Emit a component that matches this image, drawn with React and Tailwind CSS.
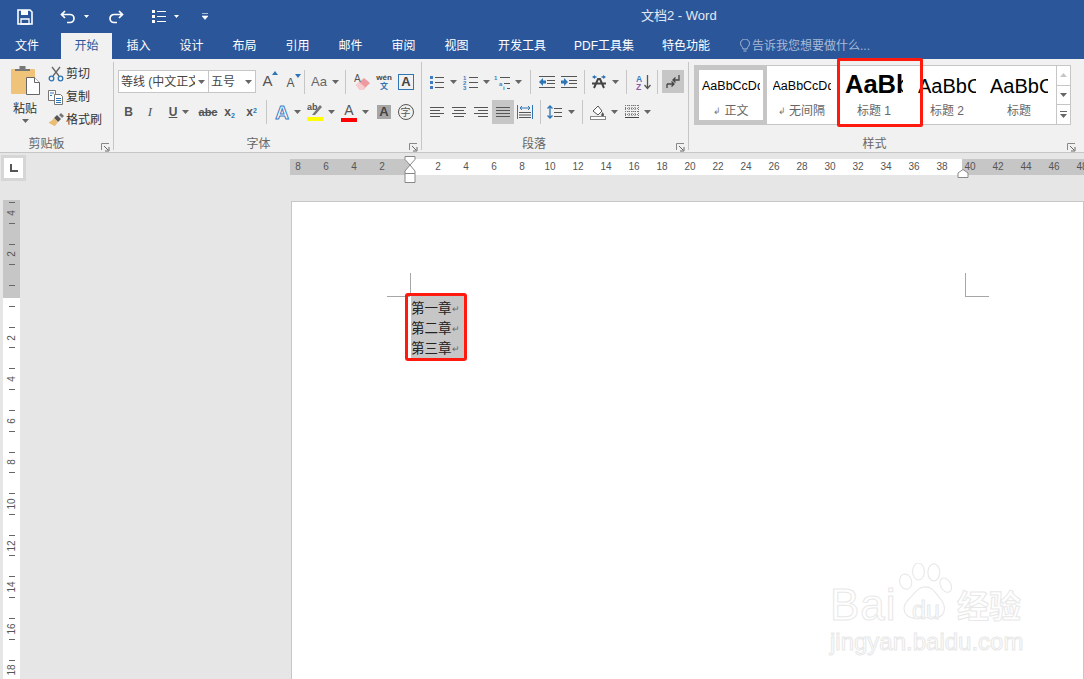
const tabs = [
  ["文件", "w-[54px] mr-[7px]"],
  ["开始", "w-[51px]"],
  ["插入", "w-[53px]"],
  ["设计", "w-[53px]"],
  ["布局", "w-[53px]"],
  ["引用", "w-[53px]"],
  ["邮件", "w-[53px]"],
  ["审阅", "w-[53px]"],
  ["视图", "w-[53px]"],
  ["开发工具", "w-[78px]"],
  ["PDF工具集", "w-[86px]"],
  ["特色功能", "w-[78px]"],
];

const leftNumbers = [8, 6, 4, 2];
const midNumbers = [2, 4, 6, 8, 10, 12, 14, 16, 18, 20, 22, 24, 26, 28, 30, 32, 34, 36, 38];
const rightNumbers = [40, 42, 44, 46, 48];
const sideNumbers = [4, 2, "", 2, 4, 6, 8, 10, 12, 14, 16, 18];

function Caret({ className = "" }) {
  return (
    <svg width="7" height="4" viewBox="0 0 7 4" className={className}>
      <path d="M0 0h7L3.5 4z" fill="#666" />
    </svg>
  );
}

function Btn({ className = "w-[22px]", caret, active, children }) {
  return (
    <div className={`flex h-full shrink-0 items-center justify-center ${active ? "bg-[#c6c6c6]" : ""} ${className}`}>
      {children}
      {caret ? <Caret className="ml-[5px]" /> : null}
    </div>
  );
}

function Sep({ className = "" }) {
  return <div className={`h-[24px] w-px shrink-0 bg-[#c6c6c6] ${className}`} />;
}

function Launcher({ className = "right-[3px]" }) {
  return (
    <svg width="9" height="9" viewBox="0 0 9 9" className={`absolute bottom-[-1px] ${className}`}>
      <path d="M.5 7V.5H8" fill="none" stroke="#888" />
      <path d="M3 3l4 4M4 8h4V4" fill="none" stroke="#666" />
    </svg>
  );
}

function Group({ className, labelClass, launcherClass, label, children }) {
  return (
    <div className={`my-[3px] flex h-[88px] shrink-0 flex-col border-r border-[#c6c6c6] ${className}`}>
      <div className="min-h-0 flex-1">{children}</div>
      <div className={`relative top-[1px] h-[14px] text-center text-[12px] leading-[14px] text-[#666] ${labelClass}`}>
        {label}
        <Launcher className={launcherClass} />
      </div>
    </div>
  );
}

function Svg16({ children, w = 16, h = 16 }) {
  return (
    <svg width={w} height={h} viewBox={`0 0 ${w} ${h}`} className="shrink-0">
      {children}
    </svg>
  );
}

function LinesIcon({ rows }) {
  return (
    <Svg16>
      {rows.map(([x1, x2, y], i) => (
        <path key={i} d={`M${x1} ${y + 0.5}H${x2}`} stroke="#555" />
      ))}
    </Svg16>
  );
}

function Bullets() {
  return (
    <Svg16>
      <path d="M6 3.5h9M6 8.5h9M6 13.5h9" stroke="#555" />
      <rect x="1" y="2" width="3" height="3" fill="#3f7cc0" />
      <rect x="1" y="7" width="3" height="3" fill="#3f7cc0" />
      <rect x="1" y="12" width="3" height="3" fill="#3f7cc0" />
    </Svg16>
  );
}

function Numbered() {
  return (
    <Svg16>
      <path d="M7 3.5h9M7 8.5h9M7 13.5h9" stroke="#555" />
      <text x="1" y="6" fontSize="6" fontWeight="700" fill="#3f7cc0">1</text>
      <text x="1" y="11" fontSize="6" fontWeight="700" fill="#3f7cc0">2</text>
      <text x="1" y="16" fontSize="6" fontWeight="700" fill="#3f7cc0">3</text>
    </Svg16>
  );
}

function MultiLevel() {
  return (
    <Svg16>
      <path d="M6 3.5h10M10 9.5h6M13 14.5h3" stroke="#555" />
      <text x="0" y="6" fontSize="6" fontWeight="700" fill="#3f7cc0">1</text>
      <text x="5" y="12" fontSize="6" fontWeight="700" fill="#3f7cc0">a</text>
      <text x="9" y="16" fontSize="6" fontWeight="700" fill="#3f7cc0">i</text>
    </Svg16>
  );
}

function Indent({ flip }) {
  return (
    <Svg16>
      <path d="M0 2.5h16M8 6.5h8M8 9.5h8M0 13.5h16" stroke="#555" />
      {flip ? (
        <path d="M0 6.5h3V4l4 4-4 4V9.5H0z" fill="#2e75b6" />
      ) : (
        <path d="M7 6.5H4V4L0 8l4 4V9.5h3z" fill="#2e75b6" />
      )}
    </Svg16>
  );
}

function ChineseLayout() {
  return (
    <Svg16>
      <path d="M3 14l4-9h2l4 9M1 9.5h14" fill="none" stroke="#444" strokeWidth="2" />
      <path d="M1 3l3-2v1.300h1.500v1.400H4V5zM15 3l-3-2v1.300h-1.500v1.400H12V5z" fill="#2e75b6" />
    </Svg16>
  );
}

function SortIcon() {
  return (
    <Svg16 w={15}>
      <text x="0" y="7.500" fontSize="8.500" fontWeight="700" fill="#3f7cc0">A</text>
      <text x="0" y="15.500" fontSize="8.500" fontWeight="700" fill="#8a5aa8">Z</text>
      <path d="M11.500 1v13M8.500 11l3 3.500 3-3.500" fill="none" stroke="#555" strokeWidth="1.300" />
    </Svg16>
  );
}

function ParaMark() {
  return (
    <Svg16>
      <path d="M14 1v5H8M10.500 3.500L8 6l2.500 2.500" fill="none" stroke="#444" strokeWidth="1.300" />
      <path d="M2 10h7M6.500 7.500L9 10l-2.500 2.500M2 10v4" fill="none" stroke="#444" strokeWidth="1.300" />
    </Svg16>
  );
}

function Distributed() {
  return (
    <Svg16>
      <path d="M.5 1v14M15.500 1v14" stroke="#2e75b6" />
      <path d="M3 4h10M5 2l-2 2 2 2M11 2l2 2-2 2" fill="none" stroke="#2e75b6" />
      <path d="M2 8.500h12M2 11h12M2 13.500h12" stroke="#555" />
    </Svg16>
  );
}

function LineSpacing() {
  return (
    <Svg16>
      <path d="M3 2v12M.500 4.500L3 2l2.500 2.500M.500 11.500L3 14l2.500-2.500" fill="none" stroke="#2e75b6" strokeWidth="1.300" />
      <path d="M7 4.500h8M7 8.500h8M7 12.500h8" stroke="#555" />
    </Svg16>
  );
}

function Fill() {
  return (
    <Svg16>
      <path d="M3 7l5-5 4 5-4 4z" fill="#fff" stroke="#555" />
      <path d="M12.500 8c1 1.500 1.500 2 1.500 3a1.300 1.300 0 0 1-2.800 0c0-1 .700-1.500 1.300-3z" fill="#555" />
      <rect x=".500" y="12.500" width="15" height="3" fill="#fff" stroke="#888" />
    </Svg16>
  );
}

function Borders() {
  return (
    <Svg16 w={14}>
      <path d="M.500 1v13M4 1v13M7 1v13M10 1v13M13.500 1v13M0 1.500h14M0 4.500h14M0 7.500h14M0 10.500h14" stroke="#777" strokeDasharray="1 1" />
      <path d="M0 13.500h14" stroke="#444" />
    </Svg16>
  );
}

function Scissors() {
  return (
    <Svg16>
      <path d="M4 1l7 9M12 1L5 10" stroke="#666" strokeWidth="1.300" />
      <circle cx="3.500" cy="12.500" r="2.300" fill="none" stroke="#2e75b6" strokeWidth="1.300" />
      <circle cx="12.500" cy="12.500" r="2.300" fill="none" stroke="#2e75b6" strokeWidth="1.300" />
    </Svg16>
  );
}

function CopyIcon() {
  return (
    <Svg16>
      <path d="M.500 1.500h7v10h-7z" fill="#fff" stroke="#777" />
      <path d="M6.500 5.500h6l2 2v8h-8z" fill="#fff" stroke="#777" />
      <path d="M2 4h4M2 6.500h2M8 9.500h5M8 11.500h5M8 13.500h5" stroke="#2e75b6" />
    </Svg16>
  );
}

function Painter() {
  return (
    <Svg16 w={17}>
      <path d="M9 3l4 4-3 3-4-4z" fill="#555" />
      <path d="M11 3l2-2 3 3-2 2z" fill="#777" />
      <path d="M6 6l4 4-3 4c-2-.500-5-2-6.500-4 2 0 3.500-1.500 5.500-4z" fill="#e9bd73" />
    </Svg16>
  );
}

function Paste() {
  return (
    <svg width="29" height="29" viewBox="0 0 29 29" className="shrink-0">
      <rect x="0" y="3" width="24" height="25" rx="1" fill="#efc47a" />
      <path d="M4 5V3h4.500V0h6v3H19v2z" fill="#777" />
      <path d="M15.500 11.500h8l5 5v12h-13z" fill="#fff" stroke="#666" />
      <path d="M23.500 11.500v5h5" fill="#fff" stroke="#666" />
    </svg>
  );
}

function Eraser() {
  return (
    <Svg16 w={17}>
      <path d="M2 11l8-7 6 5-7 7H6z" fill="#ef9aa0" />
      <path d="M2 11l3-3 6 5-2 3H6z" fill="#f7cdd0" />
      <text x="0" y="8" fontSize="10" fill="#555">A</text>
    </Svg16>
  );
}

function TextEffect() {
  return (
    <span className="text-[19px] leading-none font-bold text-white [-webkit-text-stroke:1px_#3f7cc0]">A</span>
  );
}

function Highlighter() {
  return (
    <div className="flex h-[20px] w-[16px] flex-col">
      <svg width="16" height="14" viewBox="0 0 16 14">
        <text x="0" y="8" fontSize="9" fontWeight="700" fill="#555">ab</text>
        <path d="M5 13l8-10 2 2-7 8z" fill="#777" />
      </svg>
      <div className="mt-[1px] h-[4px] bg-[#ffff00]" />
    </div>
  );
}

function Row({ className = "", children }) {
  return <div className={`flex items-center ${className}`}>{children}</div>;
}

function StyleItem({ className, sample, label, mark }) {
  return (
    <div className={`flex h-full shrink-0 flex-col items-center overflow-hidden ${className}`}>
      {sample}
      <div className="mt-auto flex items-center text-[12px] leading-[14px] text-[#666]">
        {mark ? <span className="mr-[3px] text-[9px] text-[#777]">↲</span> : null}
        {label}
      </div>
    </div>
  );
}

function Watermark() {
  return (
    <div className="absolute top-[360px] left-[536px] h-[110px] w-[210px] text-white">
      <span className="absolute top-[18px] left-[2px] font-['Liberation_Sans',sans-serif] text-[44px] leading-[50px] tracking-[1px] [-webkit-text-stroke:1px_#e8e8e8]">
        Bai
      </span>
      <svg width="60" height="63" viewBox="0 0 70 74" className="absolute top-[1px] left-[69px]">
        <g fill="#fff" stroke="#e8e8e8" strokeWidth="1.300">
          <ellipse cx="10" cy="22" rx="7" ry="9" transform="rotate(-15 10 22)" />
          <ellipse cx="25" cy="10" rx="7" ry="10" />
          <ellipse cx="43" cy="11" rx="7" ry="10" />
          <ellipse cx="57" cy="26" rx="6" ry="9" transform="rotate(-30 57 26)" />
          <path d="M33 28c8 0 11 6 16 12 5 5 8 10 6 17-3 9-12 9-22 7-10 2-20 2-24-6-3-8 2-13 7-18 6-6 9-12 17-12z" />
        </g>
      </svg>
      <span className="absolute top-[34px] left-[84px] font-['Liberation_Sans',sans-serif] text-[25px] leading-[28px] text-white [-webkit-text-stroke:1px_#e8e8e8]">
        du
      </span>
      <span className="absolute top-[22px] left-[129px] text-[32px] leading-[46px] font-bold whitespace-nowrap [-webkit-text-stroke:1px_#e8e8e8]">
        经验
      </span>
      <span className="absolute top-[65px] left-[2px] font-['Liberation_Sans',sans-serif] text-[24px] leading-[30px] whitespace-nowrap [-webkit-text-stroke:1px_#e8e8e8]">
        jingyan.baidu.com
      </span>
    </div>
  );
}

export default function App() {
  return (
    <div className="relative h-[679px] w-[1084px] overflow-hidden bg-[#e6e6e6] font-['Liberation_Sans','Noto_Sans_CJK_SC',sans-serif] text-[#444]">
      {/* title bar */}
      <div className="flex h-[33px] items-center bg-[#2b579a] text-white">
        <div className="ml-[17px] flex w-[16px] items-center">
          <svg width="16" height="16" viewBox="0 0 16 16">
            <path d="M1 1h12l2 2v12H1z" fill="none" stroke="#fff" strokeWidth="1.600" />
            <path d="M4 1h7v5H4z" fill="#fff" />
            <path d="M4 10h8v5H4z" fill="none" stroke="#fff" strokeWidth="1.300" />
          </svg>
        </div>
        <svg width="16" height="14" viewBox="0 0 16 14" className="ml-[27px]">
          <path d="M5 1L1.500 4.500 5 8M2 4.500h8a4 4 0 0 1 0 8H7" fill="none" stroke="#fff" strokeWidth="1.700" />
        </svg>
        <svg width="5" height="3" viewBox="0 0 5 3" className="ml-[8px]"><path d="M0 0h5L2.500 3z" fill="#fff" /></svg>
        <svg width="16" height="14" viewBox="0 0 16 14" className="ml-[19px]">
          <path d="M11 1l3.500 3.500L11 8M14 4.500H6a4 4 0 0 0 0 8h3" fill="none" stroke="#fff" strokeWidth="1.700" />
        </svg>
        <svg width="14" height="15" viewBox="0 0 14 15" className="ml-[28px]">
          <path d="M5 2.500h9M5 7.500h9M5 12.500h9" stroke="#fff" />
          <path d="M0 1h3v3H0zM0 6h3v3H0zM0 11h3v3H0z" fill="#fff" />
        </svg>
        <svg width="5" height="3" viewBox="0 0 5 3" className="ml-[8px]"><path d="M0 0h5L2.500 3z" fill="#fff" /></svg>
        <svg width="6" height="7" viewBox="0 0 6 7" className="ml-[23px]"><path d="M0 .500h6M0 3h6L3 6.500z" fill="#fff" stroke="#fff" strokeWidth=".6" /></svg>
        <div className="mt-[-2px] ml-[433px] text-[13px] whitespace-nowrap text-[#e3e9f2]">文档2 - Word</div>
      </div>

      {/* tabs */}
      <div className="flex h-[26px] bg-[#2b579a] text-[12px] text-white">
        {tabs.map(([name, width]) => (
          <div
            key={name}
            className={`flex shrink-0 items-center justify-center ${width} ${name === "开始" ? "bg-[#f1f1f1] text-[#2b579a]" : ""}`}
          >
            {name}
          </div>
        ))}
        <div className="ml-[14px] flex items-center text-[#a8bad6]">
          <svg width="12" height="14" viewBox="0 0 12 14" className="mr-[1px]">
            <path d="M4 10c0-2-2.500-3-2.500-5.500a4.500 4.500 0 0 1 9 0C10.500 7 8 8 8 10zM4.500 12h3" fill="none" stroke="#a8bad6" />
          </svg>
          告诉我您想要做什么...
        </div>
      </div>

      {/* ribbon */}
      <div className="flex h-[94px] border-b border-[#c6c6c6] bg-[#f1f1f1] text-[12px]">
        <Group className="w-[114px]" labelClass="pr-[20px]" label="剪贴板">
          <div className="flex pt-[4px] pl-[11px]">
            <div className="flex w-[28px] flex-col items-center">
              <Paste />
              <div className="mt-[7px] w-[30px] text-center leading-[14px] whitespace-nowrap text-[#333]">粘贴</div>
              <Caret className="mt-[3px]" />
            </div>
            <div className="mt-[-4px] ml-[9px] flex flex-col">
              {[
                ["剪切", <Scissors key="a" />],
                ["复制", <CopyIcon key="b" />],
                ["格式刷", <Painter key="c" />],
              ].map(([text, icon]) => (
                <div key={text} className="flex h-[23px] items-center whitespace-nowrap text-[#333]">
                  <span className="flex w-[18px]">{icon}</span>
                  {text}
                </div>
              ))}
            </div>
          </div>
        </Group>

        <Group className="w-[308px]" labelClass="pr-[18px]" label="字体">
          <div className="flex flex-col gap-[7px] pt-[8px] pl-[4px]">
            <Row className="h-[23px]">
              <div className="flex h-[23px] w-[138px] border border-[#c6c6c6] bg-white text-[12px] text-[#444]">
                <div className="flex w-[90px] items-center justify-between overflow-hidden border-r border-[#c6c6c6] pr-[3px] pl-[2px] whitespace-nowrap">
                  <span className="w-[74px] overflow-hidden">等线 (中文正文)</span>
                  <Caret />
                </div>
                <div className="flex flex-1 items-center justify-between pr-[3px] pl-[2px]">
                  五号
                  <Caret />
                </div>
              </div>
              <Btn className="w-[23px]">
                <span className="relative text-[15px] text-[#555]">
                  A
                  <svg width="6" height="4" viewBox="0 0 6 4" className="absolute top-[1px] right-[-5px]"><path d="M0 4h6L3 0z" fill="#2e75b6" /></svg>
                </span>
              </Btn>
              <Btn className="w-[23px]">
                <span className="relative mt-[2px] text-[12px] text-[#555]">
                  A
                  <svg width="6" height="4" viewBox="0 0 6 4" className="absolute top-[0px] right-[-6px]"><path d="M0 0h6L3 4z" fill="#2e75b6" /></svg>
                </span>
              </Btn>
              <Sep className="ml-[2px] mr-[2px]" />
              <Btn className="w-[36px]" caret>
                <span className="text-[13px] text-[#666]">Aa</span>
              </Btn>
              <Sep className="ml-[2px] mr-[5px]" />
              <Btn><Eraser /></Btn>
              <Btn>
                <div className="flex flex-col items-center text-[8px] leading-[9px] font-bold text-[#444]">
                  <span>wén</span>
                  <span className="text-[#2e75b6]">文</span>
                </div>
              </Btn>
              <Btn>
                <div className="flex h-[16px] w-[16px] items-center justify-center border border-[#2e75b6] text-[13px] font-bold text-[#444]">A</div>
              </Btn>
            </Row>
            <Row className="h-[24px] text-[#555]">
              <Btn className="w-[21px]"><span className="text-[12px] font-bold">B</span></Btn>
              <Btn><span className="font-['Liberation_Serif',serif] text-[13px] italic">I</span></Btn>
              <Btn className="w-[36px]" caret><span className="text-[12px] font-bold underline">U</span></Btn>
              <Btn><span className="text-[11px] font-bold line-through">abc</span></Btn>
              <Btn className="w-[21px]"><span className="text-[12px] font-bold">x<sub className="text-[7px] text-[#2e75b6]">2</sub></span></Btn>
              <Btn className="w-[23px]"><span className="text-[12px] font-bold">x<sup className="text-[7px] text-[#2e75b6]">2</sup></span></Btn>
              <Sep className="ml-[3px] mr-[5px]" />
              <Btn className="w-[32px]" caret><TextEffect /></Btn>
              <Btn className="w-[34px]" caret><Highlighter /></Btn>
              <Btn className="w-[34px]" caret>
                <div className="flex h-[20px] w-[16px] flex-col items-center">
                  <span className="text-[14px] leading-[16px] text-[#555]">A</span>
                  <div className="h-[4px] w-full bg-[#ff0000]" />
                </div>
              </Btn>
              <Btn className="ml-[3px] w-[18px]">
                <div className="flex h-[14px] w-[14px] items-center justify-center bg-[#a6a6a6] text-[13px] font-bold text-[#444]">A</div>
              </Btn>
              <Btn className="w-[25px]">
                <div className="flex h-[16px] w-[16px] items-center justify-center rounded-full border border-[#555] text-[10px]">字</div>
              </Btn>
            </Row>
          </div>
        </Group>

        <Group className="w-[267px]" labelClass="pr-[42px]" label="段落">
          <div className="flex flex-col gap-[7px] pt-[8px] pl-[4px]">
            <Row className="h-[23px]">
              <Btn className="w-[33px]" caret><Bullets /></Btn>
              <Btn className="w-[34px]" caret><Numbered /></Btn>
              <Btn className="w-[30px]" caret><MultiLevel /></Btn>
              <Sep className="ml-[7px] mr-[5px]" />
              <Btn><Indent /></Btn>
              <Btn><Indent flip /></Btn>
              <Sep className="ml-[4px] mr-[5px]" />
              <Btn className="w-[30px]" caret><ChineseLayout /></Btn>
              <Sep className="ml-[6px] mr-[5px]" />
              <Btn><SortIcon /></Btn>
              <Sep className="ml-[3px] mr-[4px]" />
              <Btn active><ParaMark /></Btn>
            </Row>
            <Row className="h-[24px]">
              <Btn><LinesIcon rows={[[1, 15, 3], [1, 11, 6], [1, 15, 9], [1, 11, 12]]} /></Btn>
              <Btn><LinesIcon rows={[[1, 15, 3], [3, 13, 6], [1, 15, 9], [3, 13, 12]]} /></Btn>
              <Btn><LinesIcon rows={[[1, 15, 3], [5, 15, 6], [1, 15, 9], [5, 15, 12]]} /></Btn>
              <Btn active><LinesIcon rows={[[1, 15, 3], [1, 15, 6], [1, 15, 9], [1, 15, 12]]} /></Btn>
              <Btn><Distributed /></Btn>
              <Sep className="ml-[4px] mr-[5px]" />
              <Btn className="w-[30px]" caret><LineSpacing /></Btn>
              <Sep className="ml-[6px] mr-[6px]" />
              <Btn className="w-[30px]" caret><Fill /></Btn>
              <Btn className="ml-[2px] w-[34px]" caret><Borders /></Btn>
            </Row>
          </div>
        </Group>

        <Group className="w-[395px] border-r-0" labelClass="pr-[24px]" launcherClass="right-[8px]" label="样式">
          <div className="mt-[3px] ml-[5px] flex h-[60px] w-[377px] border border-[#c6c6c6] bg-white text-black">
            <StyleItem
              className="w-[72px] border-[4px] border-[#c6c6c6] pb-[2px]"
              mark
              label="正文"
              sample={<div className="mt-[5px] h-[22px] w-[58px] overflow-hidden text-[12.500px] leading-[22px] whitespace-nowrap">AaBbCcDd</div>}
            />
            <StyleItem
              className="w-[69px] pb-[6px]"
              mark
              label="无间隔"
              sample={<div className="mt-[9px] h-[22px] w-[58px] overflow-hidden text-[12.500px] leading-[22px] whitespace-nowrap">AaBbCcDd</div>}
            />
            <StyleItem
              className="w-[76px] pb-[6px]"
              label="标题 1"
              sample={<div className="mt-[2px] h-[32px] w-[58px] overflow-hidden text-[25.500px] leading-[32px] font-bold whitespace-nowrap">AaBbC</div>}
            />
            <StyleItem
              className="w-[70px] pb-[6px]"
              label="标题 2"
              sample={<div className="mt-[6px] h-[28px] w-[58px] overflow-hidden text-[20px] leading-[28px] whitespace-nowrap">AaBbCc</div>}
            />
            <StyleItem
              className="w-[74px] pb-[6px]"
              label="标题"
              sample={<div className="mt-[6px] h-[28px] w-[58px] overflow-hidden text-[20px] leading-[28px] whitespace-nowrap">AaBbCc</div>}
            />
            <div className="ml-auto flex w-[15px] flex-col border-l border-[#c6c6c6]">
              <div className="flex flex-1 items-center justify-center">
                <svg width="7" height="4" viewBox="0 0 7 4"><path d="M0 4h7L3.500 0z" fill="#c6c6c6" /></svg>
              </div>
              <div className="flex flex-1 items-center justify-center border-y border-[#c6c6c6]"><Caret /></div>
              <div className="flex flex-1 flex-col items-center justify-center gap-[2px]">
                <div className="h-px w-[7px] bg-[#666]" />
                <Caret />
              </div>
            </div>
          </div>
        </Group>
      </div>

      {/* horizontal ruler */}
      <div className="flex h-[47px]">
        <div className="mt-[2px] ml-[1px] h-[26px] w-[25px] bg-[#d6d6d6] p-[3px]">
          <div className="flex h-[20px] w-[19px] items-center justify-center bg-white">
            <svg width="8" height="8" viewBox="0 0 8 8"><path d="M1 0v7h7" fill="none" stroke="#555" strokeWidth="2" /></svg>
          </div>
        </div>
        <div className="relative mt-[6px] ml-[264px] flex h-[16px] text-[10px] leading-[16px] text-[#555]">
          <div className="flex w-[120px] bg-[#c6c6c6]">
            {leftNumbers.map((n) => (
              <div key={n} className="flex w-[28px] justify-center first:ml-[-6px]">{n}</div>
            ))}
          </div>
          <div className="flex w-[552px] bg-white pl-[14px]">
            {midNumbers.map((n) => (
              <div key={n} className="flex w-[28px] shrink-0 justify-center">{n}</div>
            ))}
          </div>
          <div className="flex w-[122px] overflow-hidden bg-[#c6c6c6]">
            {rightNumbers.map((n) => (
              <div key={n} className="flex w-[28px] shrink-0 justify-center first:ml-[-6px]">{n}</div>
            ))}
          </div>
          <svg width="12" height="28" viewBox="0 0 12 28" className="absolute top-[-3px] left-[114px]">
            <path d="M1 .500h10v3L6 9 1 3.500zM6 9l5 6v2.500H1V15z" fill="#fff" stroke="#888" />
            <path d="M1 17.500h10v9H1z" fill="#fff" stroke="#888" />
          </svg>
          <svg width="12" height="9" viewBox="0 0 12 9" className="absolute top-[10px] left-[667px]">
            <path d="M1 8.500V4l5-3.500L11 4v4.500z" fill="#fff" stroke="#888" />
          </svg>
        </div>
      </div>

      {/* document area */}
      <div className="flex h-[479px]">
        <div className="ml-[3px] h-full w-[17px] overflow-hidden bg-[linear-gradient(#c6c6c6_98px,#fff_98px)] text-[10px] text-[#555]">
          <div className="mt-[-8px]">
            {sideNumbers.map((n, i) => (
              <div key={i} className="flex h-[41.600px] flex-col items-center justify-between py-[10px]">
                <div className="h-px w-[6px] bg-[#666]" />
                <span className="-rotate-90 leading-[12px]">{n}</span>
                <div className="h-px w-[6px] bg-[#666]" />
              </div>
            ))}
          </div>
        </div>

        <div className="relative mt-[1px] ml-[271px] h-[520px] w-[793px] border border-[#c6c6c6] bg-white pt-[94px] pl-[119px]">
          <div className="absolute top-[71px] left-[118px] h-[23px] w-px bg-[#a6a6a6]" />
          <div className="absolute top-[94px] left-[95px] h-px w-[23px] bg-[#a6a6a6]" />
          <div className="absolute top-[71px] left-[673px] h-[23px] w-px bg-[#a6a6a6]" />
          <div className="absolute top-[94px] left-[673px] h-px w-[24px] bg-[#a6a6a6]" />

          <div className="w-[54px] bg-[#c6c6c6] pt-[3px] text-[13.500px] leading-[20px] text-[#222]">
            {["第一章", "第二章", "第三章"].map((line) => (
              <div key={line} className="flex items-center whitespace-nowrap">
                {line}
                <span className="text-[9px] leading-none text-[#666]">↵</span>
              </div>
            ))}
          </div>

          <Watermark />
        </div>
      </div>

      {/* red annotation frames */}
      <div className="absolute top-[58px] left-[837px] h-[69px] w-[86px] rounded-[2px] border-[3px] border-[#ff1a0f]" />
      <div className="absolute top-[293px] left-[405px] h-[68px] w-[62px] rounded-[3px] border-[3px] border-[#ff1a0f]" />
    </div>
  );
}
